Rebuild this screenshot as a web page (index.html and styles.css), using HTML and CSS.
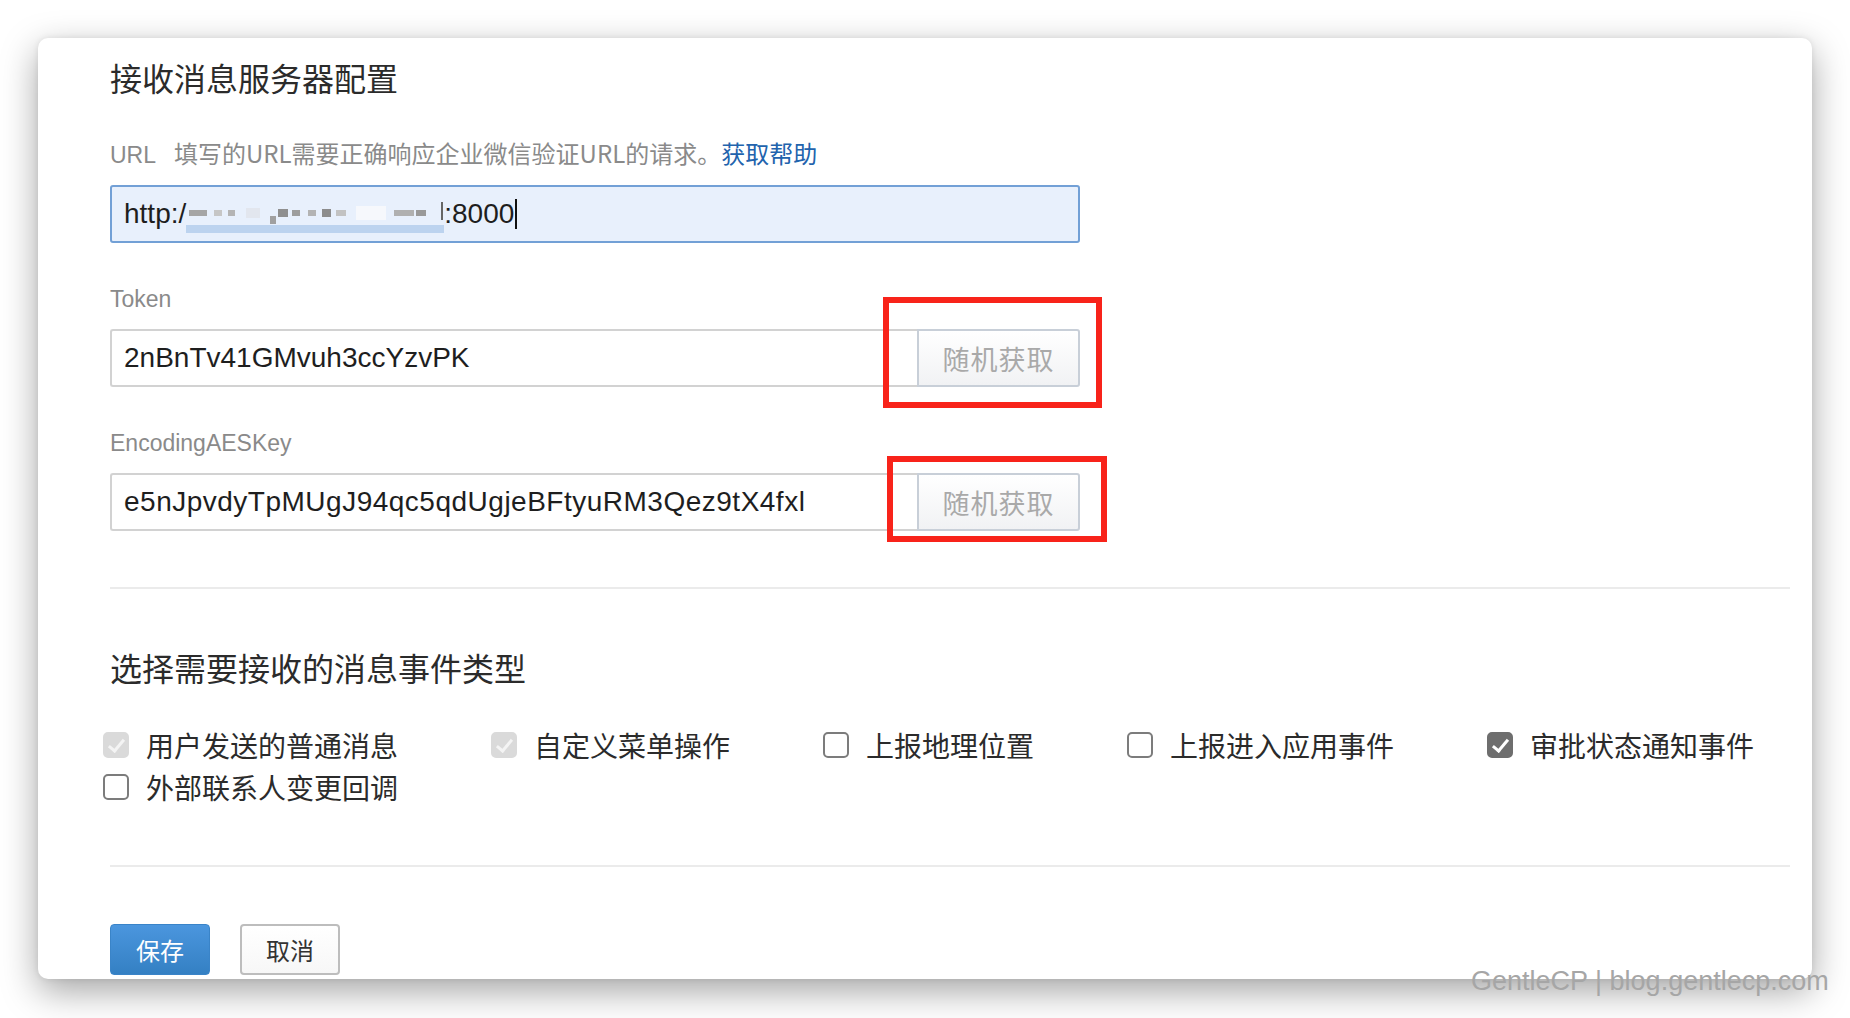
FILE: index.html
```html
<!DOCTYPE html>
<html lang="zh-CN">
<head>
    <meta charset="UTF-8">
    <meta name="viewport" content="width=device-width, initial-scale=1.0">
    <title>接收消息服务器配置</title>

    <link rel="stylesheet" href="styles.css">
</head>
<body>

    <div class="window">
        <h1 class="section-title">接收消息服务器配置</h1>

        <div class="field">
            <label class="field-label">URL<span class="hint">填写的URL需要正确响应企业微信验证URL的请求。<a href="#" class="help-link">获取帮助</a></span></label>
            <div class="url-input">
                <span>http:/</span><span class="blur"></span><span>:8000</span><span class="caret"></span>
            </div>
        </div>

        <div class="field">
            <label class="field-label">Token</label>
            <div class="input-group">
                <input type="text" class="text-input" value="2nBnTv41GMvuh3ccYzvPK">
                <button class="random-button">随机获取</button>
                <div class="mark mark-token"></div>
            </div>
        </div>

        <div class="field">
            <label class="field-label">EncodingAESKey</label>
            <div class="input-group">
                <input type="text" class="text-input key-input" value="e5nJpvdyTpMUgJ94qc5qdUgjeBFtyuRM3Qez9tX4fxl">
                <button class="random-button">随机获取</button>
                <div class="mark mark-aes"></div>
            </div>
        </div>

        <hr class="divider">

        <h2 class="section-title events-title">选择需要接收的消息事件类型</h2>

        <div class="events">
            <label class="event"><input type="checkbox" checked disabled><span>用户发送的普通消息</span></label>
            <label class="event"><input type="checkbox" checked disabled><span>自定义菜单操作</span></label>
            <label class="event"><input type="checkbox"><span>上报地理位置</span></label>
            <label class="event"><input type="checkbox"><span>上报进入应用事件</span></label>
            <label class="event"><input type="checkbox" checked><span>审批状态通知事件</span></label>
            <label class="event"><input type="checkbox"><span>外部联系人变更回调</span></label>
        </div>

        <hr class="divider divider-bottom">

        <div class="actions">
            <button class="save-button">保存</button>
            <button class="cancel-button">取消</button>
        </div>
    </div>

    <div class="watermark">GentleCP | blog.gentlecp.com</div>

</body>
</html>
```

FILE: styles.css
```css
/* Page and window frame */
html, body {
    margin: 0;
    padding: 0;
    background-color: #fff;
    font-family: "Liberation Sans", "Noto Sans CJK SC", sans-serif;
    color: #333;
}

body {
    position: relative;
    height: 1018px;
    overflow: hidden;
}

.window {
    box-sizing: border-box;
    width: 1774px;
    height: 941px;
    margin: 38px 0 0 38px;
    padding: 19px 22px 0 72px;
    background-color: #fff;
    border-radius: 10px;
    box-shadow: 0 12px 36px rgba(0, 0, 0, 0.36), 0 0 6px rgba(0, 0, 0, 0.08);
    overflow: hidden;
}

/* Titles */
.section-title {
    margin: 0;
    font-family: "Noto Sans CJK SC", sans-serif;
    font-size: 32px;
    font-weight: 400;
    line-height: 40px;
    color: #2b2b2b;
}

.events-title {
    margin-top: 58px;
}

/* Form fields */
.field {
    margin-top: 40px;
}

.field-label {
    display: block;
    margin-bottom: 14px;
    font-size: 23px;
    line-height: 32px;
    color: #8a8a8a;
}

.hint {
    margin-left: 18px;
    font-family: "Noto Sans CJK SC", sans-serif;
    font-size: 24px;
}

.help-link {
    color: #2263ad;
    text-decoration: none;
}

.url-input {
    box-sizing: border-box;
    display: flex;
    align-items: center;
    width: 970px;
    height: 58px;
    padding: 0 12px;
    background-color: #e8f0fc;
    border: 2px solid #72a0d6;
    border-radius: 3px;
    font-size: 28px;
    color: #1e1e1e;
}

/* mosaic over the hidden part of the address */
.blur {
    display: inline-block;
    width: 258px;
    height: 40px;
    background:
        linear-gradient(#a5a5a5, #a5a5a5) 3px 16px / 18px 6px no-repeat,
        linear-gradient(#c6c6c6, #c6c6c6) 28px 16px / 8px 6px no-repeat,
        linear-gradient(#b4b4b4, #b4b4b4) 42px 16px / 7px 6px no-repeat,
        linear-gradient(#e2e6ee, #e2e6ee) 60px 14px / 14px 10px no-repeat,
        linear-gradient(#8f8f8f, #8f8f8f) 92px 15px / 10px 8px no-repeat,
        linear-gradient(#a0a0a0, #a0a0a0) 84px 22px / 6px 8px no-repeat,
        linear-gradient(#9d9d9d, #9d9d9d) 106px 16px / 8px 6px no-repeat,
        linear-gradient(#b3b3b3, #b3b3b3) 122px 16px / 8px 6px no-repeat,
        linear-gradient(#8c8c8c, #8c8c8c) 136px 15px / 9px 8px no-repeat,
        linear-gradient(#c2c2c2, #c2c2c2) 150px 16px / 10px 6px no-repeat,
        linear-gradient(#f6f8fc, #f6f8fc) 170px 12px / 30px 14px no-repeat,
        linear-gradient(#b0b0b0, #b0b0b0) 208px 16px / 20px 6px no-repeat,
        linear-gradient(#999, #999) 230px 16px / 10px 6px no-repeat,
        linear-gradient(#666, #666) 255px 8px / 2px 18px no-repeat,
        linear-gradient(#bcd3ef, #bcd3ef) 0 31px / 258px 8px no-repeat;
}

.caret {
    display: inline-block;
    width: 2px;
    height: 30px;
    margin-left: 1px;
    background-color: #111;
}

.input-group {
    position: relative;
    display: flex;
    width: 970px;
    height: 58px;
}

.text-input {
    box-sizing: border-box;
    flex: 1;
    height: 58px;
    margin: 0;
    padding: 0 12px;
    border: 2px solid #d2d2d2;
    border-right: none;
    border-radius: 3px 0 0 3px;
    font-family: "Liberation Sans", sans-serif;
    font-size: 28px;
    color: #1e1e1e;
    outline: none;
}

.key-input {
    letter-spacing: 0.5px;
}

.random-button {
    box-sizing: border-box;
    width: 163px;
    height: 58px;
    margin: 0;
    background: linear-gradient(#ffffff, #f1f2f4);
    border: 2px solid #c8cfd8;
    border-radius: 0 3px 3px 0;
    font-family: "Noto Sans CJK SC", sans-serif;
    font-size: 27px;
    color: #a9a9a9;
    letter-spacing: 1px;
}

/* red annotation boxes */
.mark {
    position: absolute;
    box-sizing: border-box;
    border: 6px solid #f8231a;
}

.mark-token {
    left: 773px;
    top: -32px;
    width: 219px;
    height: 111px;
}

.mark-aes {
    left: 777px;
    top: -17px;
    width: 220px;
    height: 86px;
}

.divider {
    margin: 56px 0 0;
    height: 2px;
    border: none;
    background-color: #ebebeb;
}

.divider-bottom {
    margin-top: 57px;
}

/* Event checkboxes */
.events {
    display: flex;
    flex-wrap: wrap;
    column-gap: 93px;
    margin: 37px 0 0 -7px;
}

.event {
    display: flex;
    align-items: center;
    height: 42px;
    font-family: "Noto Sans CJK SC", sans-serif;
    font-size: 28px;
    color: #2b2b2b;
}

.event input {
    appearance: none;
    -webkit-appearance: none;
    position: relative;
    box-sizing: border-box;
    width: 26px;
    height: 26px;
    margin: 0 17px 0 0;
    border: 2px solid #7c7c7c;
    border-radius: 5px;
    background-color: #fff;
}

.event input:checked {
    background-color: #6e6e6e;
    border-color: #6e6e6e;
}

.event input:checked:disabled {
    background-color: #dadada;
    border-color: #dadada;
}

.event input:checked::after {
    content: "";
    position: absolute;
    left: 7px;
    top: 2px;
    width: 6px;
    height: 13px;
    border: solid #fff;
    border-width: 0 3px 3px 0;
    transform: rotate(40deg);
}

.event input:checked:disabled::after {
    border-color: #f4f4f4;
}

/* Bottom buttons */
.actions {
    display: flex;
    gap: 30px;
    margin-top: 57px;
}

.save-button,
.cancel-button {
    box-sizing: border-box;
    width: 100px;
    height: 51px;
    border-radius: 4px;
    font-family: "Noto Sans CJK SC", sans-serif;
    font-size: 24px;
}

.save-button {
    background: linear-gradient(#4b96de, #3480c3);
    border: 1px solid #3a84c8;
    color: #fff;
}

.cancel-button {
    background: linear-gradient(#ffffff, #f7f7f7);
    border: 2px solid #bdbdbd;
    color: #333;
}

.watermark {
    position: absolute;
    left: 1471px;
    top: 964px;
    font-family: "Liberation Sans", sans-serif;
    font-size: 27px;
    line-height: 34px;
    color: #a6a6a6;
}
```
